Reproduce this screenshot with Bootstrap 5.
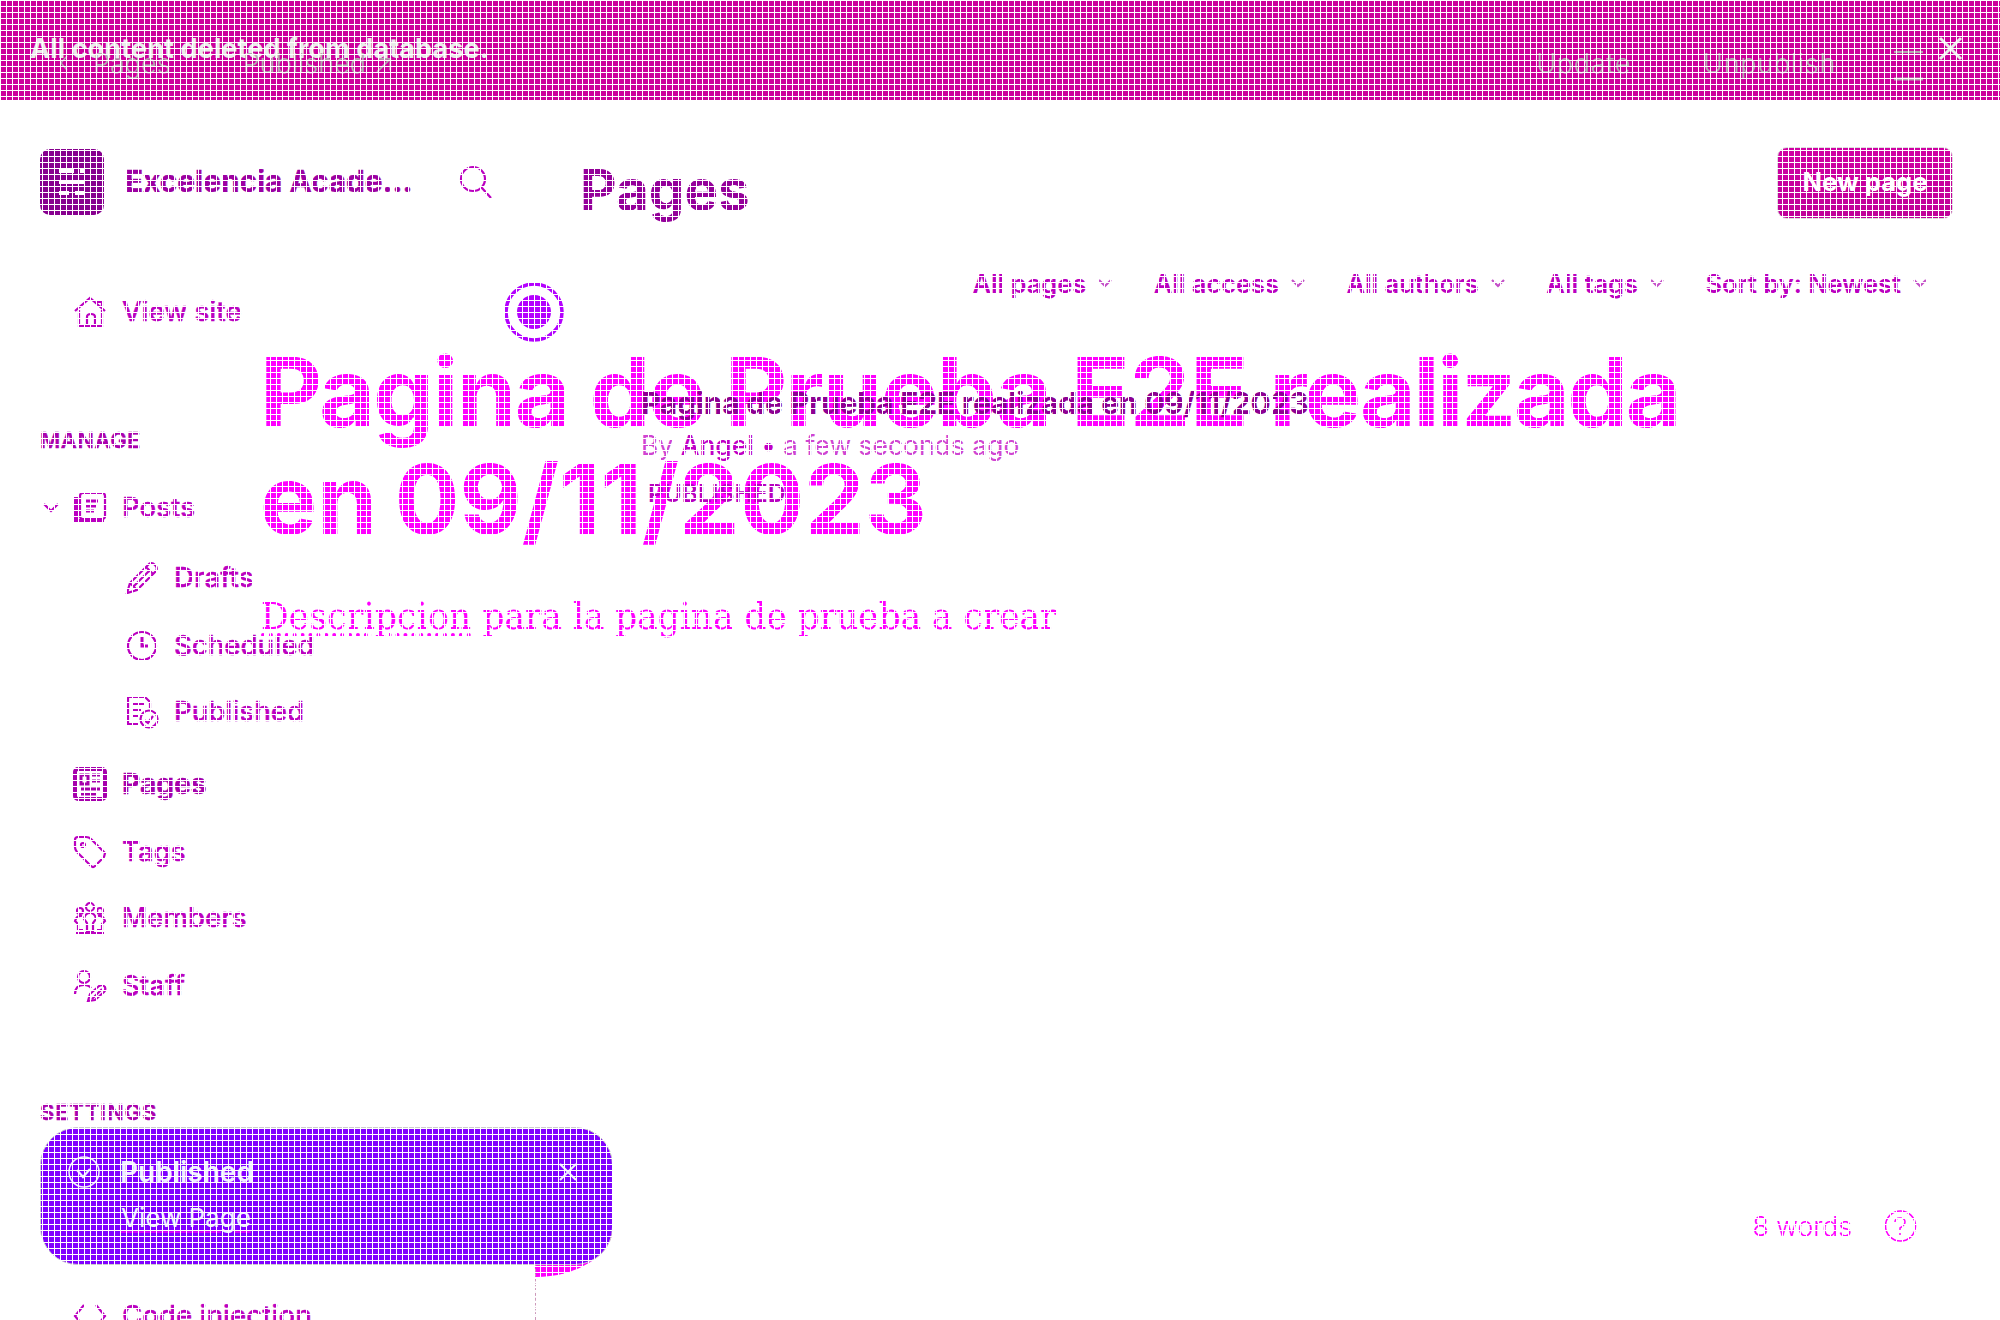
<!DOCTYPE html>
<html lang="en">
<head>
<meta charset="utf-8">
<title>Pages</title>
<link rel="stylesheet" href="https://cdn.jsdelivr.net/npm/bootstrap@5.3.0/dist/css/bootstrap.min.css">
<style>
body{width:2000px;height:1320px;overflow:hidden;position:relative;background:#fff;font-family:Inter,sans-serif;font-size:27.6px;line-height:1;color:#bb00c0;font-weight:500;white-space:nowrap}
svg{display:block;fill:none;stroke:currentColor;stroke-width:2.2;flex:none;overflow:visible}
.banner{height:100px;background:#cc009c;color:#e9ece9;padding:0 38px 4px 30px;font-size:27px;font-weight:700;letter-spacing:.11px}
.banner,.editor-bar{z-index:3}
.shell{height:1220px}
.side{width:535px;padding-left:40px;flex:none}
.side span{-webkit-text-stroke:.4px currentColor}
.brand{height:164px}
.logo{width:64px;height:66px;border-radius:10px;background:#87008f;color:#fff;margin-right:21px}
.site-name{font-size:29.8px;font-weight:700;color:#9c00a2;width:334px}
.item{height:68px;padding-left:34px;position:relative}
.item svg{margin-right:16px}
.item.home{height:96px}
.sub{padding-left:86px}
.item.drafts{height:66px;margin-top:3px}
.item.sched{margin-top:1px}
.item.publ{height:64px}
.item.current{margin-top:6px;font-weight:700;font-size:28.2px;color:#a600ac}
.item.tags{height:67px}
.item.members{height:66px}
.item.staff{height:70px}
.item.code{margin-top:136px}
.item .chev{position:absolute;left:3px;top:29px;margin:0}
.head-cap{height:68px;font-size:22px;font-weight:600;color:#aa00ae;letter-spacing:.5px}
.head-cap.manage{margin-top:46px}
.head-cap.settings{margin-top:57px;letter-spacing:.85px}
.main-area{padding:0 47px 0 46px}
.title-row{height:165px}
.title-row h1{font-size:56.5px;font-weight:700;color:#94009a;margin:14px 0 0 -1px}
.new-btn{width:176px;height:72px;border-radius:10px;background:linear-gradient(#d000a4,#bf0098);color:#fff;font-size:25.6px;font-weight:700;border:1px solid #ddd;padding:0}
.filters{font-size:25.5px;font-weight:600;letter-spacing:-.05px;height:37px;padding-right:27px;gap:42.500px}
.filters svg{margin-left:13px;color:#c44fc8}
.entry{padding:86px 0 0 60px}
.entry-title{font-size:30px;font-weight:700;letter-spacing:-.2px;color:#8d0092;position:relative;z-index:3}
.entry-meta{font-size:26.4px;font-weight:400;letter-spacing:.05px;color:#cf45d2;margin-top:14px}
.entry-meta b{font-weight:500;color:#c000c6}
.entry-state{font-size:24.5px;font-weight:600;color:#b800c0;margin:23px 0 0 7px;position:relative;z-index:3}
.editor{position:absolute;inset:0;color:#f0f;z-index:1;padding-top:339px}
.editor-bar{height:126px;padding:0 77px 0 60px;color:#b3a9b0;font-weight:300;font-size:27px}
.bar-back{margin-left:25px}
.bar-state{margin-left:72px}
.bar-act{letter-spacing:.7px}
.bar-act+.bar-act{margin-left:72px}
.bar-panel{margin-left:58px}
.editor-title{font-size:96px;line-height:107px;font-weight:700;letter-spacing:-1.7px;margin-left:260px}
.editor-title .num{letter-spacing:0}
.editor-title .last{letter-spacing:-2.2px}
.editor-title .date{letter-spacing:0;word-spacing:-5px}
.editor-text{font-family:"DejaVu Serif Condensed","DejaVu Serif",serif;font-size:38px;letter-spacing:.11px;font-weight:400;margin:44px 0 0 261px}
.editor-text u{text-decoration:underline dotted 4px;text-underline-offset:4px;letter-spacing:.4px}
.dot{position:absolute;left:504px;top:282px;color:#b400ff;z-index:4}
.words{position:absolute;right:84px;top:1210px;font-size:26.6px;font-weight:300;gap:33px}
.toast-tail{position:absolute;left:535px;top:1200px;width:78px;height:77px;background:#f0f;border-radius:0 0 78px 0/0 0 50px 0}
.side-line{position:absolute;left:535px;top:1264px;height:56px;border-left:1px dashed #c9b}
.note{position:absolute;left:40px;top:1127px;width:573px;height:138px;border-radius:38px;background:#8000ff;border:1px solid #ccc;z-index:5;color:#eef;padding:28px 36px 0 27px}
.note strong{font-size:28px;font-weight:600;margin-left:20px}
.note .view{font-weight:400;margin:17px 0 0 53px;font-size:26px;text-decoration:underline #d000ff 2px;text-underline-offset:4px}
.mesh{position:absolute;inset:0;z-index:9;pointer-events:none;background:linear-gradient(#fff 1px,transparent 1px) 0 0/6px 6px,linear-gradient(90deg,#fff 1px,transparent 1px) 0 0/6px 6px}
</style>
<script src="https://cdn.jsdelivr.net/npm/bootstrap@5.3.0/dist/js/bootstrap.bundle.min.js"></script>
</head>
<body>
<header class="banner d-flex align-items-center justify-content-between position-relative"><span>All content deleted from database.</span>
<svg width="23" height="23"><path d="M1 1 22 22M22 1 1 22" stroke-width="3"/></svg></header>
<div class="shell d-flex">
<nav class="side">
<div class="brand d-flex align-items-center"><div class="logo d-flex align-items-center justify-content-center"><svg width="28" height="28"><path stroke-width="4" d="M1 3H16M22 3H27M1 14H27M1 25H11M17 25H27"/></svg></div><span class="site-name">Excelencia Acade...</span><svg width="33" height="33"><circle cx="14" cy="13" r="12"/><path d="M23 22 32 32"/></svg></div>
<div class="item home d-flex align-items-center"><svg width="32" height="32"><path d="M1 15 16 2 31 15M5 14V30H28V14M13 30V21Q13 18 17 18T21 21V30M23 6H28V11"/></svg><span>View site</span></div>
<div class="head-cap manage d-flex align-items-center"><span>MANAGE</span></div>
<div class="item d-flex align-items-center"><svg class="chev" width="16" height="9"><path d="M1 1 8 8 15 1"/></svg><svg width="32" height="32"><rect x="6" y="1" width="25" height="26" rx="3"/><path d="M2 5V29H30" stroke-width="4"/><path d="M12 9H24M12 14H22M12 19H20" stroke-width="3"/></svg><span>Posts</span></div>
<div class="item sub drafts d-flex align-items-center"><svg width="32" height="32"><path d="M1 31 4 21 23 2Q26 0 29 3T30 9L11 28ZM4 21 11 28M20 5 27 12M8 24 24 8"/></svg><span>Drafts</span></div>
<div class="item sub sched d-flex align-items-center"><svg width="32" height="32"><circle cx="16" cy="16" r="14"/><path d="M16 7V16H22" stroke-width="3"/></svg><span>Scheduled</span></div>
<div class="item sub publ d-flex align-items-center"><svg width="32" height="32"><path d="M12 28H2V1H19L24 6V12M7 8H18M7 14H15M7 20H12"/><circle cx="23" cy="23" r="8.5"/><path d="M18 24 22 27 27 20"/></svg><span>Published</span></div>
<div class="item current d-flex align-items-center"><svg width="32" height="34"><rect x="1" y="2" width="30" height="30" rx="3" stroke-width="4"/><path d="M7 8H14V17H7ZM18 8H26M18 14H26M7 22H26M7 27H22" stroke-width="3"/></svg><span>Pages</span></div>
<div class="item tags d-flex align-items-center"><svg width="32" height="32"><path d="M4 1H12Q15 1 17 3L31 17 30 21 21 30Q19 32 17 30L3 16Q1 14 1 11V4Q1 1 4 1"/><circle cx="9" cy="9" r="2"/></svg><span>Tags</span></div>
<div class="item members d-flex align-items-center"><svg width="32" height="32"><circle cx="16" cy="5" r="4"/><circle cx="6" cy="9" r="3"/><circle cx="26" cy="9" r="3"/><path d="M16 11Q11 11 10 17L13 21V29H19V21L22 17Q21 11 16 11M8 14Q3 13 1 19L4 22V28H9M24 14Q29 13 31 19L28 22V28H23M2 31H30"/></svg><span>Members</span></div>
<div class="item staff d-flex align-items-center"><svg width="32" height="32"><circle cx="10" cy="7" r="6"/><path d="M1 24Q1 15 10 15Q15 15 17 18M14 31 16 24 25 16Q28 14 31 17 32 20 30 22L21 30ZM18 29 28 19"/></svg><span>Staff</span></div>
<div class="head-cap settings d-flex align-items-center"><span>SETTINGS</span></div>
<div class="item code d-flex align-items-center"><svg width="32" height="24"><path d="M10 1 1 12 10 23M22 1 31 12 22 23"/></svg><span>Code injection</span></div>
</nav>
<main class="main-area flex-grow-1">
<div class="title-row d-flex align-items-center justify-content-between"><h1>Pages</h1><button class="btn new-btn">New page</button></div>
<div class="filters d-flex align-items-center justify-content-end">
<div class="d-flex align-items-center">All pages<svg width="12" height="8"><path d="M0 0 6 6 12 0"/></svg></div>
<div class="d-flex align-items-center">All access<svg width="12" height="8"><path d="M0 0 6 6 12 0"/></svg></div>
<div class="d-flex align-items-center">All authors<svg width="12" height="8"><path d="M0 0 6 6 12 0"/></svg></div>
<div class="d-flex align-items-center">All tags<svg width="12" height="8"><path d="M0 0 6 6 12 0"/></svg></div>
<div class="d-flex align-items-center">Sort by: Newest<svg width="12" height="8"><path d="M0 0 6 6 12 0"/></svg></div></div>
<div class="entry"><div class="entry-title">Pagina de Prueba E2E realizada en 09/11/2023</div>
<div class="entry-meta">By <b>Angel</b> <b>•</b> a few seconds ago</div>
<div class="entry-state">PUBLISHED</div></div>
</main></div>
<section class="editor">
<div class="editor-title">Pagina de Prueba <span class="num">E2E</span> <span class="last">realizada</span><br><span class="date">en 09/11/2023</span></div>
<div class="editor-text"><u>Descripcion</u> para la pagina de prueba a crear</div>
<div class="words d-flex align-items-center"><span>8 words</span><svg width="31" height="32"><circle cx="15.5" cy="16" r="15" stroke-width="1.5"/><path d="M10 12Q10 8 15 8T20 12Q20 15 15 18V20M15 23V25" stroke-width="1.5"/></svg></div>
<div class="toast-tail"></div><div class="side-line"></div>
</section>
<div class="editor-bar d-flex position-absolute top-0 start-0 w-100 align-items-center"><svg width="8" height="16"><path d="M7 1 1 8 7 15" stroke-width="1.5"/></svg><span class="bar-back">Pages</span><span class="bar-state">Published ↗</span><span class="bar-act ms-auto">Update</span><span class="bar-act">Unpublish</span><svg class="bar-panel" width="29" height="28"><path d="M0 3H29"/><path d="M0 30H29" stroke-width="3"/></svg></div>
<svg class="dot" width="60" height="60"><circle cx="30" cy="30" r="28" stroke-width="3.5"/><circle cx="30" cy="30" r="17" fill="currentColor" stroke="none"/></svg>
<aside class="note"><div class="d-flex align-items-center"><svg width="32" height="32"><circle cx="16" cy="16" r="15" stroke-width="1.5"/><path d="M9 14 15 21 22 13"/></svg><strong>Published</strong><svg class="ms-auto" width="16" height="16"><path d="M0 0 16 16M16 0 0 16"/></svg></div><div class="view">View Page</div></aside>
<div class="mesh"></div>
</body>
</html>
